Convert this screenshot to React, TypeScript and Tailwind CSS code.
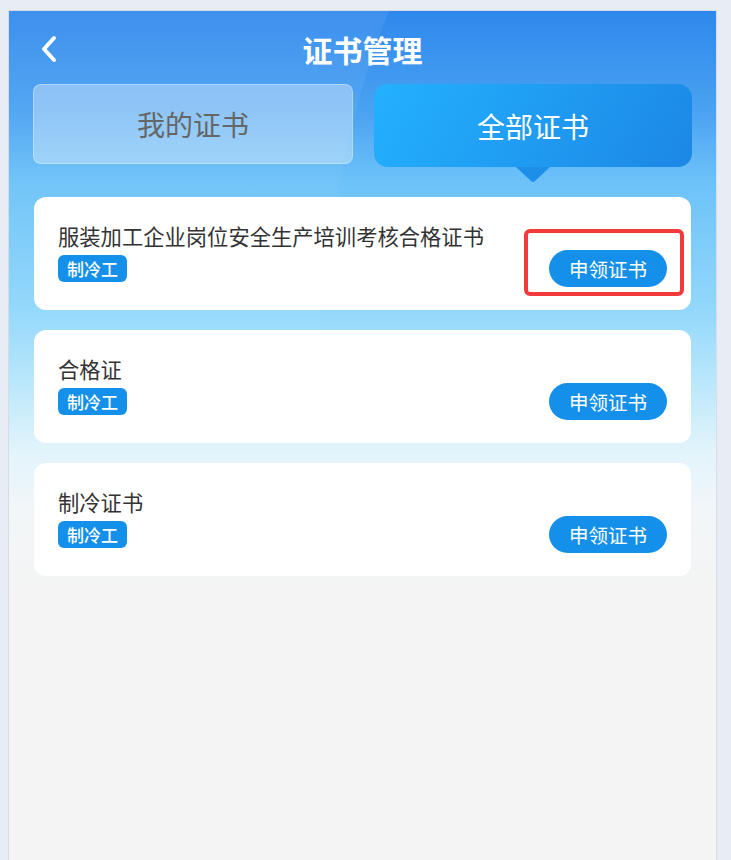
import React from "react";

const FONT = { fontFamily: '"Noto Sans CJK SC", "Noto Sans", sans-serif' };

interface Cert {
  name: string;
  tag: string;
  highlight?: boolean;
}

const certs: Cert[] = [
  { name: "服装加工企业岗位安全生产培训考核合格证书", tag: "制冷工", highlight: true },
  { name: "合格证", tag: "制冷工" },
  { name: "制冷证书", tag: "制冷工" },
];

function BackIcon() {
  return (
    <svg width="16" height="28" viewBox="0 0 16 28" fill="none">
      <path
        d="M13 3 L3 14 L13 25"
        stroke="white"
        strokeWidth="4"
        strokeLinecap="round"
        strokeLinejoin="round"
      />
    </svg>
  );
}

function CertCard({ cert }: { cert: Cert }) {
  return (
    <div className="flex h-[113px] flex-col rounded-[12px] bg-white px-6 pt-[25px]">
      <div className="text-[21.3px] leading-[28px] text-[#333]">{cert.name}</div>
      <div className="flex items-center justify-between">
        <span className="flex h-[27px] w-[69px] items-center justify-center rounded-[6px] bg-[#1590ea] text-[17px] font-medium leading-none text-white">
          {cert.tag}
        </span>
        <div className="relative">
          <button className="flex h-[37px] w-[118px] items-center justify-center rounded-full bg-[#1590ea] text-[19.5px] leading-none text-white">
            申领证书
          </button>
          {cert.highlight && (
            <div className="pointer-events-none absolute -bottom-[9px] -left-[25px] -right-[17px] -top-[21px] rounded-[6px] border-4 border-[#f23a3a]" />
          )}
        </div>
      </div>
    </div>
  );
}

export default function App() {
  return (
    <div className="min-h-[860px] bg-[#e8ecf4] pl-[8px] pt-[10px]" style={FONT}>
      <div className="relative h-[850px] w-[709px] overflow-hidden border border-b-0 border-[#d6dce5] bg-[linear-gradient(180deg,#2f88ec_0px,#4aa2f1_100px,#6cc2f8_170px,#93d8fb_300px,#bfe9fb_380px,#e2f4fb_440px,#f2f6f8_500px,#f4f4f4_580px,#f4f4f4_100%)]">
        {/* faint decorative light sweep */}
        <svg className="pointer-events-none absolute left-0 top-0" width="707" height="400" viewBox="0 0 707 400">
          <defs>
            <linearGradient id="sweep" x1="0" y1="0" x2="0" y2="1">
              <stop offset="0" stopColor="#ffffff" stopOpacity="0.07" />
              <stop offset="1" stopColor="#ffffff" stopOpacity="0" />
            </linearGradient>
          </defs>
          <path d="M0 0 L380 0 Q334 110 318 260 L308 400 L0 400 Z" fill="url(#sweep)" />
        </svg>

        <div className="relative">
          <div className="mt-[14px] grid h-[48px] grid-cols-[1fr_auto_1fr] items-center">
            <div className="pl-[32px]">
              <BackIcon />
            </div>
            <div className="text-[30px] font-bold leading-none text-white">证书管理</div>
            <div />
          </div>

          <div className="mt-[11px] flex items-start gap-[21px] px-6">
            <div className="flex h-[80px] flex-1 items-center justify-center rounded-[8px] border border-white/30 bg-white/35 text-[28px] text-[#666]">
              我的证书
            </div>
            <div className="relative flex h-[83px] flex-1 items-center justify-center rounded-[14px] bg-[linear-gradient(120deg,#23b1fe,#1c87e6)] text-[28px] text-white">
              全部证书
              <svg className="absolute left-1/2 top-full -translate-x-1/2" width="34" height="16" viewBox="0 0 34 16">
                <path d="M0 0 L34 0 L19 14 Q17 16 15 14 Z" fill="#1e8fe9" />
              </svg>
            </div>
          </div>

          <div className="mt-[30px] flex flex-col gap-[20px] px-[25px]">
            {certs.map((c) => (
              <CertCard key={c.name} cert={c} />
            ))}
          </div>
        </div>
      </div>
    </div>
  );
}
